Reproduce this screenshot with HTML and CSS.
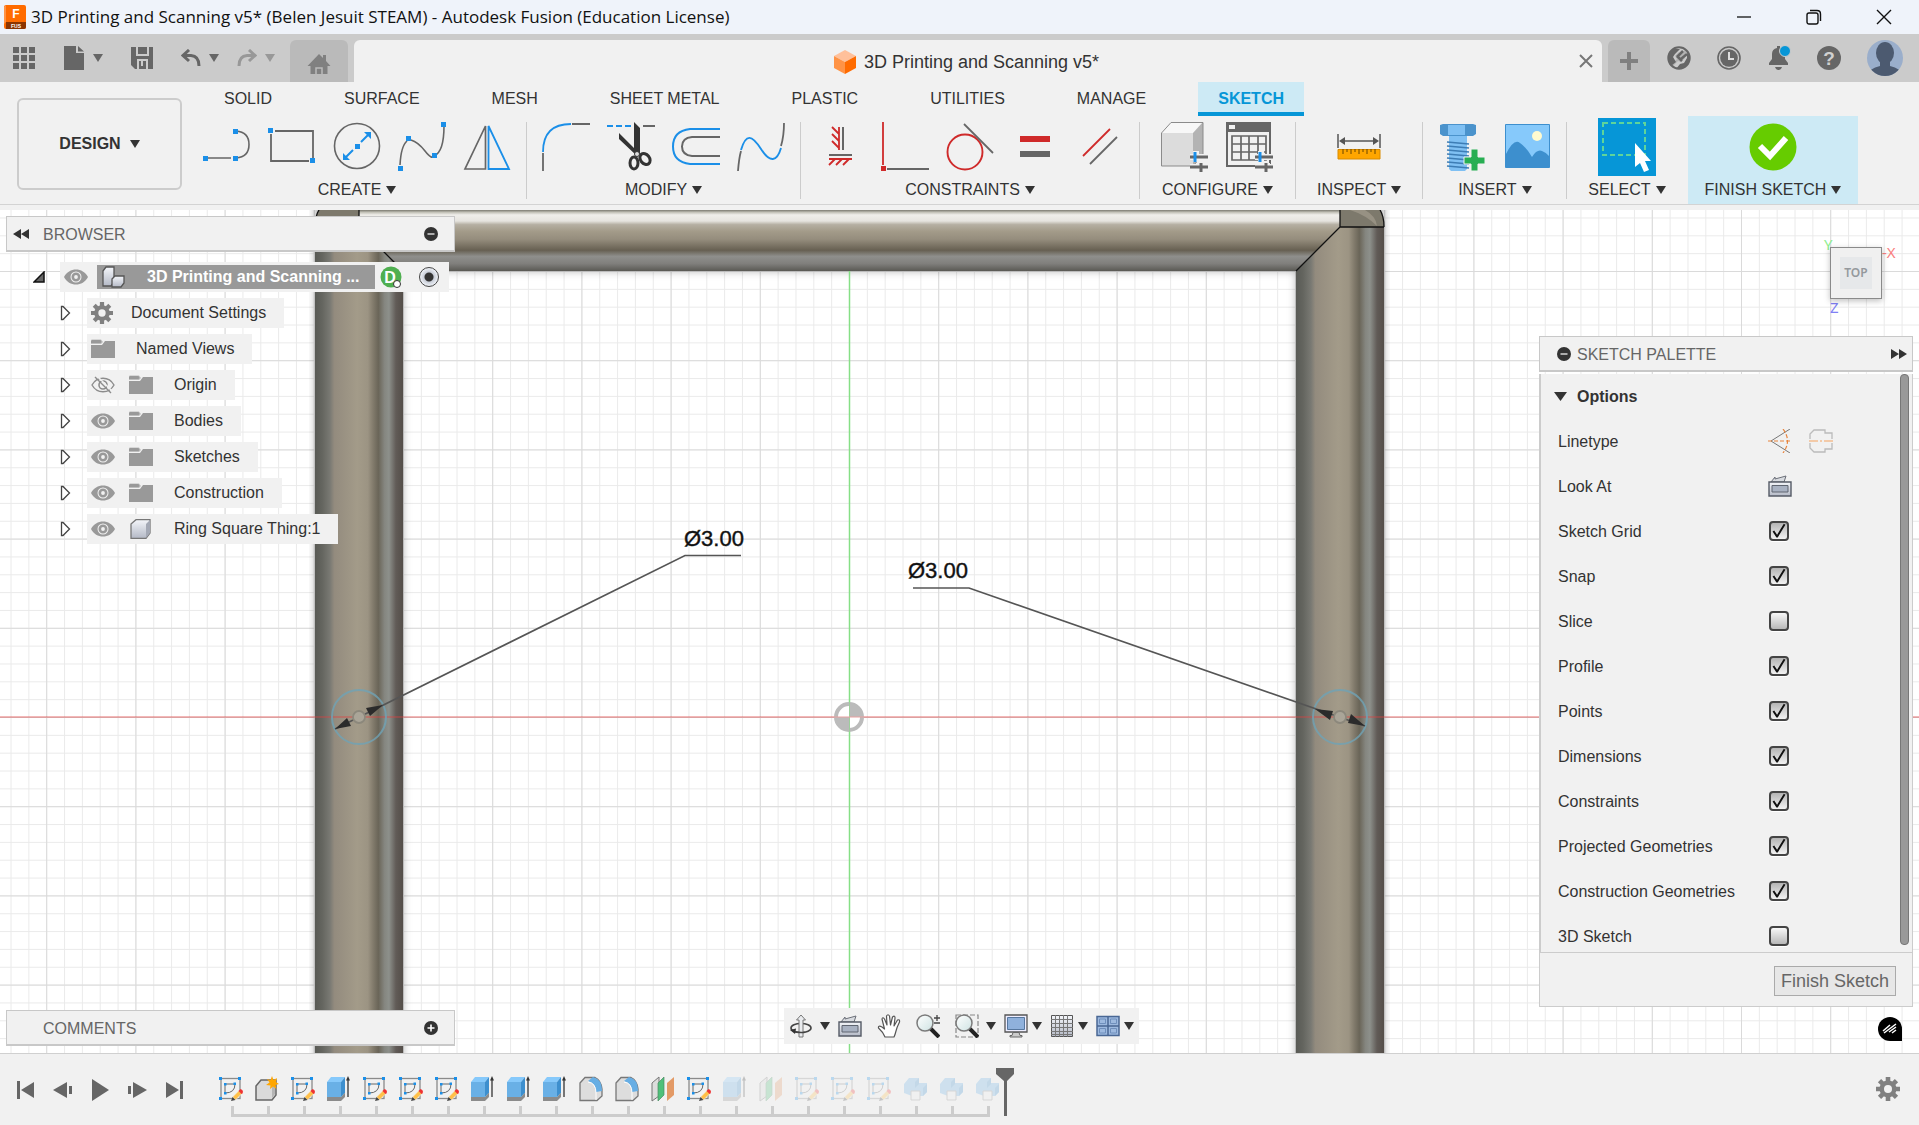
FILE: index.html
```html
<!DOCTYPE html>
<html lang="en">
<head>
<meta charset="utf-8">
<meta name="viewport" content="width=device-width, initial-scale=1">
<title>3D Printing and Scanning v5* - Autodesk Fusion</title>
<link rel="stylesheet" href="styles.css">
</head>
<body>
<svg class="sprite" aria-hidden="true">
  <defs>
    <linearGradient id="steel" x1="0" y1="0" x2="0" y2="1"><stop offset="0" stop-color="#f4f6fa"/><stop offset="1" stop-color="#b4b9c6"/></linearGradient>
    <linearGradient id="lens" x1="0" y1="0" x2="1" y2="1"><stop offset="0" stop-color="#ffffff"/><stop offset="1" stop-color="#cfe3e3"/></linearGradient>
  </defs>
  <symbol id="eye" viewBox="0 0 24 16"><path fill="#999" fill-rule="evenodd" d="M0 8C5-2 19-2 24 8 19 18 5 18 0 8ZM12 2.500a5.500 5.500 0 1 0 0 11 5.500 5.500 0 0 0 0-11Z"/><circle cx="12" cy="8" r="3.200" fill="none" stroke="#999" stroke-width="2.600"/></symbol>
  <symbol id="eye-off" viewBox="0 0 24 18"><path fill="none" stroke="#8c8c8c" stroke-width="1.400" d="M1 9C6 0 18 0 23 9 18 18 6 18 1 9ZM4 1l16 16"/><circle cx="12" cy="9" r="4" fill="none" stroke="#8c8c8c" stroke-width="1.600"/><path stroke="#f1f1f1" stroke-width="1.500" d="M6 0l16 16"/></symbol>
  <symbol id="folder" viewBox="0 0 24 20"><path fill="#bdbdbd" d="M0 1.500Q0 .5 1 .5H10L12 3 10 5H0Z"/><path fill="#999" d="M0 6H11L14 2H24V19H0Z"/><path fill="#999" d="M1 1H9.500L10.500 3 9.500 4H0V2Z"/></symbol>
  <symbol id="gear" viewBox="-12 -12 24 24"><g fill="currentColor"><path fill-rule="evenodd" d="M0-8.500A8.500 8.500 0 1 1 0 8.500 8.500 8.500 0 0 1 0-8.500ZM0-4a4 4 0 1 0 0 8 4 4 0 0 0 0-8Z"/><path id="teeth" d="M-2.300-12H2.300V-7H-2.300ZM-2.300 7H2.300V12H-2.300Z"/><use href="#teeth" transform="rotate(45)"/><use href="#teeth" transform="rotate(90)"/><use href="#teeth" transform="rotate(135)"/></g></symbol>
  <symbol id="expand" viewBox="0 0 12 16"><path fill="#fff" stroke="#444" stroke-width="1.300" d="M1.500 1.500H3L9.500 8 3 14.500H1.500Z"/></symbol>
  <symbol id="caret" viewBox="0 0 10 8"><path fill="currentColor" d="M0 0H10L5 8Z"/></symbol>
  <symbol id="t-sketch" viewBox="0 0 26 26"><rect x="3" y="2.500" width="19" height="20" fill="none" stroke="#8b8b8b" stroke-width="1.300"/><path fill="none" stroke="#666" d="M7 17V8H17Q17 17 7 17Z"/><g fill="#1b8fe8"><path d="M1 1h3v3H1ZM20 1h3v3h-3ZM1 21h3v3H1ZM6 7h2.500v2.500H6ZM15.500 6.500H18V9h-2.500ZM6 16h2.500v2.500H6Z"/></g><path fill="#ffc04a" stroke="#f1f1f1" stroke-width=".6" d="M14.500 21 21 14.500 24 17.500 17.500 24Z"/><path fill="#e33" d="M20.500 15 22.500 13Q26 14 24.500 17.500L23.500 18Z"/><path fill="#444" d="M14.500 21 17.500 24 13 25Z"/></symbol>
  <symbol id="t-extrude" viewBox="0 0 26 26"><path fill="#8b8b8b" d="M1 21H15L19 16.500V21L15 25H1Z"/><path fill="#69b0e6" d="M1 6H15V21H1Z"/><path fill="#86c9fb" d="M1 6 5 1H19L15 6Z"/><path fill="#3d8fce" d="M15 6 19 1V16.500L15 21Z"/><path stroke="#333" stroke-width="1.300" d="M22 21V3"/><path fill="#333" d="M20 4.500 22 0 24 4.500Z"/></symbol>
  <symbol id="t-component" viewBox="0 0 26 26"><path fill="#dadada" stroke="#666" stroke-width="1.500" d="M2 10 7 4H22V19L18 24H2Z"/><path fill="#b5b5b5" d="M18 11 21 8V18L18 22Z"/><path fill="#ffa600" d="M18 0 19.500 4 23 2 21.800 6 25 8 21.500 9 22.500 13 19 10.500 16 13 16.500 9.500 12 9 15.500 6.500 13 3 16.500 4Z"/></symbol>
  <symbol id="t-fillet" viewBox="0 0 26 26"><path fill="#ddd" stroke="#777" stroke-width="1.300" d="M2 7 7 1.500H17Q23 4 24 13V20L19 24.500H2Z"/><path fill="#67aee4" d="M10 5 15 1Q24 3 24 15L18 16Q18 7 10 5Z"/><path fill="none" stroke="#fff" d="M10 6Q18 7 18 17V24"/></symbol>
  <symbol id="t-split" viewBox="0 0 26 26"><path fill="#ddd" stroke="#777" d="M2 7 9 1V20L2 25Z"/><path fill="#4fc07a" stroke="#4a8a62" stroke-width=".7" d="M8 7 14 1V19L8 25Z"/><path fill="#e39a66" d="M17 7 24 1V19L17 25Z"/></symbol>
  <symbol id="t-combine" viewBox="0 0 26 26"><path fill="#69b0e6" d="M2 8 7 2H17V7H25V16L21 20H10L2 17Z"/><path fill="#3d8fce" d="M13 6 17 2V8L13 12ZM21 12 25 8V16L21 20Z"/><path fill="#eee" stroke="#888" d="M9 15H18V24H9Z"/></symbol>
  <symbol id="lookat" viewBox="0 0 24 24"><path fill="#d8dbe0" stroke="#6b6f78" d="M3 8 7 3V5L18 2 16 8Z"/><path fill="url(#steel)" stroke="#555b66" stroke-width="1.400" d="M1 8H23V22H1Z"/><path fill="#a9b2c2" stroke="#5f6570" d="M4 11.500H20V18H4Z"/></symbol>
  <symbol id="minus-dot" viewBox="0 0 14 14"><circle cx="7" cy="7" r="7" fill="#333"/><path stroke="#ccc" stroke-width="1.600" d="M3.500 7H10.500"/></symbol>
  <symbol id="plus-dot" viewBox="0 0 14 14"><circle cx="7" cy="7" r="7" fill="#333"/><path stroke="#fff" stroke-width="1.600" d="M3.500 7H10.500M7 3.500V10.500"/></symbol>
  <symbol id="sliders" viewBox="0 0 18 22"><path stroke="#f1f1f1" stroke-width="6" d="M0 6H18M0 16H18M6 0V11M12 12V22"/><path stroke="#666" stroke-width="3" d="M0 6H18M0 16H18M11 12V21"/><path stroke="#1b8fe8" stroke-width="3" d="M5 1V11"/></symbol>
</svg>

<header class="titlebar">
  <svg class="app-icon" viewBox="0 0 22 24"><rect width="22" height="24" rx="2" fill="#ff6b00"/><path fill="#ff9345" d="M0 2 2 0V17L0 19Z"/><path fill="#8c3400" d="M2 17H22V22Q22 24 20 24H2Z"/><text x="12" y="13" text-anchor="middle" font-family="Liberation Sans, sans-serif" font-weight="bold" font-size="12" fill="#fff">F</text><text x="12" y="23" text-anchor="middle" font-family="Liberation Sans, sans-serif" font-weight="bold" font-size="5" fill="#fff">FUS</text></svg>
  <h1>3D Printing and Scanning v5* (Belen Jesuit STEAM) - Autodesk Fusion (Education License)</h1>
  <div class="window-buttons">
    <button aria-label="Minimize"><svg width="16" height="16" viewBox="0 0 16 16"><path stroke="#111" stroke-width="1.300" d="M1 8H15"/></svg></button>
    <button aria-label="Restore"><svg width="16" height="16" viewBox="0 0 16 16"><rect x="1" y="4" width="11" height="11" rx="2" fill="none" stroke="#111" stroke-width="1.400"/><path fill="none" stroke="#111" stroke-width="1.400" d="M4 1.500H11Q14.500 1.500 14.500 5V12"/></svg></button>
    <button aria-label="Close"><svg width="16" height="16" viewBox="0 0 16 16"><path stroke="#111" stroke-width="1.400" d="M1 1 15 15M15 1 1 15"/></svg></button>
  </div>
</header>

<div class="tabbar">
  <div class="quick">
    <button aria-label="Data panel"><svg width="22" height="22" viewBox="0 0 22 22"><path fill="#666" d="M0 0h6v6H0ZM8 0h6v6H8ZM16 0h6v6h-6ZM0 8h6v6H0ZM8 8h6v6H8ZM16 8h6v6h-6ZM0 16h6v6H0ZM8 16h6v6H8ZM16 16h6v6h-6Z"/></svg></button>
    <button class="split" aria-label="File"><svg width="22" height="24" viewBox="0 0 22 24"><path fill="#666" d="M1 0H13V7H21V24H1ZM15 0 21 5.500H15Z"/></svg><svg class="caret"><use href="#caret"/></svg></button>
    <button aria-label="Save"><svg width="22" height="22" viewBox="0 0 22 22"><path fill="#666" d="M0 0H22V22H4L0 18Z"/><path fill="none" stroke="#cbcbcb" stroke-width="2" d="M6 0V8H17V0M7 22V13H16V22M11 14V19"/></svg></button>
    <div class="history">
      <button class="split" aria-label="Undo"><svg width="20" height="18" viewBox="0 0 20 18"><path fill="none" stroke="#666" stroke-width="3" d="M8 1 2 6.500 8 12M2 6.500H10Q18 7 18 17"/></svg><svg class="caret"><use href="#caret"/></svg></button>
      <button class="split faded" aria-label="Redo"><svg width="20" height="18" viewBox="0 0 20 18"><path fill="none" stroke="#666" stroke-width="3" d="M12 1 18 6.500 12 12M18 6.500H10Q2 7 2 17"/></svg><svg class="caret"><use href="#caret"/></svg></button>
    </div>
  </div>
  <button class="home" aria-label="Home"><svg width="24" height="20" viewBox="0 0 24 20"><path fill="#808080" d="M12 0 16 4V1H19V7L23.500 12H20.500V20H3.500V12H.5Z"/><path fill="none" stroke="#bababa" stroke-width="1.500" d="M9 20V14H15V20"/></svg></button>
  <div class="doc-tab">
    <span class="doc-title"><svg width="22" height="24" viewBox="0 0 22 24"><path fill="#ffc09a" d="M11 0 22 6 11 12 0 6Z"/><path fill="#ff9345" d="M0 6 11 12V24L0 18Z"/><path fill="#ff6b00" d="M22 6 11 12V24L22 18Z"/></svg>3D Printing and Scanning v5*</span>
    <button aria-label="Close tab"><svg width="14" height="14" viewBox="0 0 14 14"><path stroke="#777" stroke-width="2" d="M1 1 13 13M13 1 1 13"/></svg></button>
  </div>
  <button class="new-tab" aria-label="New tab"><svg width="20" height="20" viewBox="0 0 20 20"><path stroke="#808080" stroke-width="4" d="M10 1V19M1 10H19"/></svg></button>
  <div class="account">
    <button aria-label="Extensions"><svg width="24" height="24" viewBox="0 0 24 24"><circle cx="12" cy="12" r="10.700" fill="none" stroke="#666" stroke-width="2"/><path fill="#666" d="M6 3H13L8 8 6 11 9 16 4 20 1 14 2 7ZM20 6 23 12 21 18 15 23H9L13 18 17 17 20 12Z"/><path fill="#666" d="M5 18 10 13 8 10 12 6 14 8 18 4 20 6 16 10 18 12 14 16 11 15 6 20Z" fill-opacity=".25"/><path stroke="#666" stroke-width="2.500" d="M10 11 16 5M14 13 20 8M10 10 15 15"/></svg></button>
    <button aria-label="Job status"><svg width="24" height="24" viewBox="0 0 24 24"><circle cx="12" cy="12" r="11" fill="none" stroke="#666" stroke-width="1.600"/><circle cx="12" cy="12" r="8.800" fill="#666"/><path fill="none" stroke="#ddd" stroke-width="2" d="M12 6V13H17"/></svg></button>
    <button aria-label="Notifications"><svg width="24" height="26" viewBox="0 0 24 26"><path fill="#666" d="M2 20V18L5 14V9Q5 4 10 3V1H13V3Q18 4 18 9V14L21 18V20ZM8 22H15Q14 25 11.500 25T8 22Z"/><circle cx="18" cy="6" r="5.500" fill="#0696d7" stroke="#cbcbcb"/></svg></button>
    <button aria-label="Help"><svg width="24" height="24" viewBox="0 0 24 24"><circle cx="12" cy="12" r="12" fill="#666"/><text x="12" y="19" text-anchor="middle" font-family="Liberation Sans, sans-serif" font-weight="bold" font-size="19" fill="#d0d0d0">?</text></svg></button>
    <button class="avatar" aria-label="Account"><svg width="36" height="36" viewBox="0 0 36 36"><clipPath id="round"><circle cx="18" cy="18" r="18"/></clipPath><g clip-path="url(#round)"><path fill="#9aaecb" d="M0 0H36V36H0Z"/><ellipse cx="18" cy="13" rx="9" ry="11" fill="#4c5a70"/><path fill="#4c5a70" d="M13 18H23V26Q34 28 35 36H1Q2 28 13 26Z"/></g></svg></button>
  </div>
</div>

<section class="ribbon">
  <button class="workspace">DESIGN <svg class="caret"><use href="#caret"/></svg></button>
  <div class="ribbon-main">
    <nav class="modes">
      <a href="#solid">SOLID</a><a href="#surface">SURFACE</a><a href="#mesh">MESH</a><a href="#sheet">SHEET METAL</a><a href="#plastic">PLASTIC</a><a href="#utilities">UTILITIES</a><a href="#manage">MANAGE</a><a href="#sketch" class="active">SKETCH</a>
    </nav>
    <div class="groups">
      <div class="group">
        <div class="tools">
          <button aria-label="Line"><svg viewBox="0 0 48 58"><path fill="none" stroke="#666" stroke-width="1.600" d="M5 40H28M33 40Q46 39 46 26.500T33 13"/><path fill="#1b8fe8" d="M0 38h5v5H0ZM30 38h5v5h-5ZM30 11h5v5h-5Z"/></svg></button>
          <button aria-label="Rectangle"><svg viewBox="0 0 48 58"><path fill="none" stroke="#666" stroke-width="1.800" d="M7 13H45V40M41 43H3V16"/><path fill="#1b8fe8" d="M0 10h5v5H0ZM42 40h5v5h-5Z"/></svg></button>
          <button aria-label="Circle"><svg viewBox="0 0 48 58"><circle cx="24" cy="28" r="22.500" fill="none" stroke="#666" stroke-width="1.600"/><path stroke="#1b8fe8" stroke-width="2" d="M13 39 20 32M28 24 35 17"/><path fill="#1b8fe8" d="M22 26h5v5h-5ZM10 42V35L17 42ZM38 14V21L31 14Z"/></svg></button>
          <button aria-label="Spline"><svg viewBox="0 0 48 58"><path fill="none" stroke="#666" stroke-width="1.600" d="M2 47Q3 28 9 23M13 22Q20 24 27 33T36 38Q46 34 46 8"/><path fill="#1b8fe8" d="M0 48h5v5H0ZM8 18h5v5H8ZM34 35h5v5h-5ZM43 4h5v5h-5Z"/></svg></button>
          <button aria-label="Mirror"><svg viewBox="0 0 48 58"><path fill="none" stroke="#666" stroke-width="1.700" d="M22.500 8V51H2Z"/><path fill="none" stroke="#1b8fe8" stroke-width="1.800" d="M25.500 8V51H46Z"/></svg></button>
        </div>
        <button class="group-label">CREATE <svg class="caret"><use href="#caret"/></svg></button>
      </div>
      <div class="group">
        <div class="tools">
          <button aria-label="Fillet"><svg viewBox="0 0 48 58"><path fill="none" stroke="#1b8fe8" stroke-width="1.800" d="M1 34Q1 6 29 6"/><path stroke="#666" stroke-width="1.800" d="M30 6H48M1 35V53"/></svg></button>
          <button aria-label="Trim"><svg viewBox="0 0 48 58"><path stroke="#1b8fe8" stroke-width="2" stroke-dasharray="6 3" d="M0 8H26"/><path stroke="#666" stroke-width="2" d="M36 8H48"/><path fill="#333" d="M27 4 33 10V36L30 38 12 21V15L27 30Z"/><ellipse cx="27" cy="45" rx="4" ry="6" fill="none" stroke="#333" stroke-width="3"/><ellipse cx="38" cy="41" rx="4.500" ry="6" transform="rotate(-38 38 41)" fill="none" stroke="#333" stroke-width="3"/><circle cx="30" cy="36" r="2.500" fill="#ddd" stroke="#333"/></svg></button>
          <button aria-label="Offset"><svg viewBox="0 0 48 58"><path fill="none" stroke="#1b8fe8" stroke-width="2" d="M48 11H18Q1 13 1 28.500T18 46H48"/><path fill="none" stroke="#666" stroke-width="2" d="M48 19H20Q10 20 10 28.500T20 38H48"/></svg></button>
          <button aria-label="Blend curve"><svg viewBox="0 0 48 58"><path fill="none" stroke="#666" stroke-width="1.800" d="M1 53Q2 40 4 33M44 28Q47 18 47 5"/><path fill="none" stroke="#1b8fe8" stroke-width="1.900" d="M4 32C9 15 15 17 24 31S40 44 44 30"/></svg></button>
        </div>
        <button class="group-label">MODIFY <svg class="caret"><use href="#caret"/></svg></button>
      </div>
      <div class="group">
        <div class="tools">
          <button aria-label="Horizontal/Vertical"><svg viewBox="0 0 48 58"><path stroke="#cf2a2a" stroke-width="1.800" fill="none" d="M23 9V32M16 9 23 16M16 16 23 23M16 23 23 30M13 41H36M13 47 19 41M20 47 26 41M27 47 33 41"/><path stroke="#666" stroke-width="2" d="M27 9V32M13 37H36"/></svg></button>
          <button aria-label="Perpendicular"><svg viewBox="0 0 48 58"><path stroke="#cf2a2a" stroke-width="1.800" d="M2 4V47"/><path fill="#cf2a2a" d="M0 48h5v5H0Z"/><path stroke="#666" stroke-width="1.800" d="M6 51H48"/></svg></button>
          <button aria-label="Tangent"><svg viewBox="0 0 48 58"><circle cx="19" cy="34" r="17.500" fill="none" stroke="#cf2a2a" stroke-width="1.900"/><path stroke="#666" stroke-width="1.800" d="M18 6 47 35"/></svg></button>
          <button aria-label="Equal"><svg viewBox="0 0 48 58"><path fill="#cf2a2a" d="M9 18H39V24H9Z"/><path fill="#666" d="M9 33H39V39H9Z"/></svg></button>
          <button aria-label="Parallel"><svg viewBox="0 0 48 58"><path stroke="#cf2a2a" stroke-width="1.800" d="M7 38 34 11"/><path stroke="#666" stroke-width="1.800" d="M14 46 41 19"/></svg></button>
        </div>
        <button class="group-label">CONSTRAINTS <svg class="caret"><use href="#caret"/></svg></button>
      </div>
      <div class="group roomy">
        <div class="tools">
          <button aria-label="Configure body"><svg viewBox="0 0 48 58"><path fill="#dcdcdc" d="M0 15H32V48H0Z"/><path fill="#f7f7f7" d="M0 15 10 4H42L32 15Z"/><path fill="#b3b3b3" d="M32 15 42 4V37L32 48Z"/><path fill="none" stroke="#8b8b8b" d="M.5 15 10 4.500H42V37L32 48H.5Z"/><use href="#sliders" x="28" y="33" width="20" height="22"/></svg></button>
          <button aria-label="Configuration table"><svg viewBox="0 0 48 58"><path fill="#666" d="M0 4H45V14H0Z"/><path fill="#f1f1f1" d="M3 7H9V11H3Z"/><path fill="none" stroke="#666" stroke-width="2" d="M1 13V48H44V13"/><path fill="none" stroke="#666" stroke-width="1.700" d="M6 18H40V42H6ZM6 26H40M6 34H40M15 18V42M23 18V42M32 18V42"/><use href="#sliders" x="28" y="33" width="20" height="22"/></svg></button>
        </div>
        <button class="group-label">CONFIGURE <svg class="caret"><use href="#caret"/></svg></button>
      </div>
      <div class="group roomy">
        <div class="tools">
          <button aria-label="Measure"><svg viewBox="0 0 48 58"><path stroke="#555" stroke-width="1.500" d="M3 16V30M45 16V30M8 23H40"/><path fill="#555" d="M4 23 10 19V27ZM44 23 38 19V27Z"/><path fill="#ffa600" stroke="#d98b00" d="M3 31.500H45V41H3Z"/><path stroke="#6b4600" d="M8 31V36M12 31V34M16 31V36M20 31V34M24 31V36M28 31V34M32 31V36M36 31V34M40 31V36"/></svg></button>
        </div>
        <button class="group-label">INSPECT <svg class="caret"><use href="#caret"/></svg></button>
      </div>
      <div class="group">
        <div class="tools">
          <button aria-label="Insert fastener"><svg viewBox="0 0 48 58"><path fill="#4b93cc" d="M2 7 5 6H35L38 7V16L35 18H5L2 16Z"/><path fill="#7fc0f3" d="M10 7H27V17H10Z"/><path fill="#7fc0f3" d="M11 18H29V51L27 53H13L11 51Z"/><path stroke="#3d7db5" stroke-width="1.500" d="M9 24 31 26M9 28 31 30M9 32 31 34M9 36 31 38M9 40 31 42M9 44 31 46M9 48 31 50"/><path fill="#27ae52" stroke="#f1f1f1" d="M33 31H40V39H47V46H40V53H33V46H26V39H33Z"/></svg></button>
          <button aria-label="Insert canvas"><svg viewBox="0 0 48 58"><path fill="#86c9fb" stroke="#3d8fce" d="M2.500 6.500H46.500V49.500H2.500Z"/><circle cx="34" cy="18" r="5" fill="#fffbd0"/><path fill="#3d8fce" d="M3 36Q11 20 17 25 23 29 29 39 34 31 39 33T46 38V49H3Z"/></svg></button>
        </div>
        <button class="group-label">INSERT <svg class="caret"><use href="#caret"/></svg></button>
      </div>
      <div class="group roomy last">
        <div class="tools">
          <button class="select-tool" aria-label="Select"><svg viewBox="0 0 58 58"><path fill="none" stroke="#5fd49a" stroke-width="2" stroke-dasharray="5 3" d="M5 5H47V37H5Z"/><path fill="#fff" d="M37 25V49L42 45 46 54 51 52 47 43H53Z"/></svg></button>
        </div>
        <button class="group-label">SELECT <svg class="caret"><use href="#caret"/></svg></button>
      </div>
      <div class="group finish">
        <div class="tools">
          <button aria-label="Finish sketch"><svg viewBox="0 0 48 58"><circle cx="24" cy="29" r="23.500" fill="#66cc00"/><path fill="none" stroke="#fff" stroke-width="6" d="M11 28 21 38 37 20"/></svg></button>
        </div>
        <button class="group-label">FINISH SKETCH<svg class="caret"><use href="#caret"/></svg></button>
      </div>
    </div>
  </div>
</section>

<main class="viewport">
  <svg class="scene" viewBox="0 210 1919 843" preserveAspectRatio="xMidYMid slice" role="img" aria-label="Sketch of a square frame with two 3 mm holes">
    <defs>
      <pattern id="minor" x="849" y="717" width="17.840" height="17.840" patternUnits="userSpaceOnUse"><path fill="none" stroke="#eaeaea" d="M0 0H17.840M0 0V17.840" stroke-width="2"/></pattern>
      <pattern id="major" x="849" y="717" width="89.200" height="89.200" patternUnits="userSpaceOnUse"><path fill="none" stroke="#dadada" d="M0 0H89.200M0 0V89.200" stroke-width="2"/></pattern>
      <linearGradient id="post"><stop offset="0" stop-color="#595a55"/><stop offset=".08" stop-color="#64655f"/><stop offset=".17" stop-color="#797973"/><stop offset=".22" stop-color="#938b7e"/><stop offset=".48" stop-color="#a39b89"/><stop offset=".6" stop-color="#9c9483"/><stop offset=".66" stop-color="#827b6c"/><stop offset=".72" stop-color="#6a6558"/><stop offset=".79" stop-color="#858680"/><stop offset=".84" stop-color="#8d908b"/><stop offset=".92" stop-color="#615b57"/><stop offset="1" stop-color="#544e49"/></linearGradient>
      <linearGradient id="beam" x1="0" y1="0" x2="0" y2="1"><stop offset="0" stop-color="#7b7a70"/><stop offset=".04" stop-color="#c5c4ba"/><stop offset=".08" stop-color="#efeeea"/><stop offset=".18" stop-color="#e6e4df"/><stop offset=".24" stop-color="#b5afa2"/><stop offset=".35" stop-color="#a39b89"/><stop offset=".48" stop-color="#958d7d"/><stop offset=".66" stop-color="#676052"/><stop offset=".76" stop-color="#8f8f8c"/><stop offset=".88" stop-color="#807f7c"/><stop offset="1" stop-color="#5a5954"/></linearGradient>
      <filter id="soft" x="-5%" y="-5%" width="110%" height="110%"><feGaussianBlur stdDeviation="4"/></filter>
    </defs>
    <path fill="#fff" d="M0 0H1919V1200H0Z"/>
    <path fill="url(#minor)" d="M0 0H1919V1200H0Z"/>
    <path fill="url(#major)" d="M0 0H1919V1200H0Z"/>
    <path fill="none" stroke="#000" stroke-opacity=".3" stroke-width="88" filter="url(#soft)" d="M359 1140V227H1340V1140"/>
    <path fill="url(#beam)" d="M359 210H1340V227L1296 271H403L359 227Z"/>
    <path fill="url(#post)" d="M315 227H359L403 271V1200H315Z"/>
    <path fill="url(#post)" d="M1340 227H1384V1200H1296V271Z"/>
    <path fill="#7d796c" d="M315 227Q315 216 319 210H359V227ZM1384 227Q1384 216 1380 210H1340V227Z"/>
    <path fill="#979183" d="M1350 210H1365Q1376 216 1377 226 1366 215 1350 210Z"/>
    <path fill="none" stroke="#111" stroke-width="1.300" d="M315 227Q315 216 319 210M359 210V227L403 271M315 227H359M1384 227Q1384 216 1380 210M1340 210V227L1296 271M1340 227H1384"/>
    <path stroke="#e04040" stroke-opacity=".5" stroke-width="1.400" d="M0 717H1919"/>
    <path stroke="#86df86" stroke-width="1.500" d="M849.500 271V1060"/>
    <g fill="none" stroke="#6fa3b5" stroke-width="2" stroke-opacity=".8"><circle cx="359" cy="717" r="27"/><circle cx="1340" cy="717" r="27"/></g>
    <path fill="none" stroke="#555" stroke-width="1.600" d="M335 729 685 555.500H741M1365 726 969 588H913"/>
    <path fill="#2b2b2b" d="M335 729 347 718 351 726ZM383 705 366 708 370 716ZM1365 726 1348 723 1351 714ZM1315 709 1333 711 1330 720Z"/>
    <g fill="#aaa598" stroke="#8c887c" stroke-width="1.800"><circle cx="359" cy="717" r="6"/><circle cx="1340" cy="717" r="6"/></g>
    <circle cx="849" cy="717" r="13" fill="#fff" stroke="#bbb" stroke-width="4"/>
    <path fill="#bbb" d="M849 717V703A14 14 0 0 1 863 717ZM849 717V731A14 14 0 0 1 835 717Z"/>
    <path stroke="#9ccf9c" d="M849.500 702V732"/><path stroke="#e9a0a0" d="M834 717H864"/>
    <g font-family="Liberation Sans, sans-serif" font-size="22" fill="#111" stroke="#111" stroke-width=".4"><text x="684" y="546">Ø3.00</text><text x="908" y="578">Ø3.00</text></g>
  </svg>

  <aside class="browser">
    <div class="panel-head"><svg width="16" height="12" viewBox="0 0 16 12"><path fill="#333" d="M8 1V11L0 6ZM16 1V11L8 6Z"/></svg><h2>BROWSER</h2><button aria-label="Collapse"><svg width="14" height="14"><use href="#minus-dot"/></svg></button></div>
    <ul class="tree">
      <li class="root">
        <svg class="root-arrow" width="12" height="12" viewBox="0 0 12 12"><path fill="#666" stroke="#111" stroke-width="1.500" d="M1 11H11V1Z"/></svg>
        <div class="node"><svg width="24" height="16"><use href="#eye"/></svg>
          <span class="root-name"><svg width="24" height="22" viewBox="0 0 24 22"><g fill="url(#steel)" stroke="#555" stroke-width="1.300"><path d="M1 5 4 1H12V16L9 20H1Z"/><path d="M10 13 13 10H22V17L19 21H10Z"/></g></svg>3D Printing and Scanning ...</span>
          <svg class="badge" width="22" height="22" viewBox="0 0 22 22"><circle cx="11" cy="11" r="10.500" fill="#4faf50"/><text x="10" y="17" text-anchor="middle" font-family="Liberation Sans, sans-serif" font-weight="bold" font-size="16" fill="#fff">D</text><circle cx="17" cy="18" r="3.500" fill="#fff" stroke="#333"/></svg>
          <input type="radio" name="active" aria-label="Activate component" checked>
        </div>
      </li>
      <li><svg class="arrow"><use href="#expand"/></svg><div class="node doc"><svg class="cog" width="22" height="22"><use href="#gear"/></svg>Document Settings</div></li>
      <li><svg class="arrow"><use href="#expand"/></svg><div class="node views"><svg width="24" height="20"><use href="#folder"/></svg>Named Views</div></li>
      <li><svg class="arrow"><use href="#expand"/></svg><div class="node"><svg width="24" height="18"><use href="#eye-off"/></svg><svg class="kind" width="24" height="20"><use href="#folder"/></svg>Origin</div></li>
      <li><svg class="arrow"><use href="#expand"/></svg><div class="node"><svg width="24" height="16"><use href="#eye"/></svg><svg class="kind" width="24" height="20"><use href="#folder"/></svg>Bodies</div></li>
      <li><svg class="arrow"><use href="#expand"/></svg><div class="node"><svg width="24" height="16"><use href="#eye"/></svg><svg class="kind" width="24" height="20"><use href="#folder"/></svg>Sketches</div></li>
      <li><svg class="arrow"><use href="#expand"/></svg><div class="node"><svg width="24" height="16"><use href="#eye"/></svg><svg class="kind" width="24" height="20"><use href="#folder"/></svg>Construction</div></li>
      <li><svg class="arrow"><use href="#expand"/></svg><div class="node"><svg width="24" height="16"><use href="#eye"/></svg><svg class="kind" width="24" height="20" viewBox="0 0 24 20"><path fill="url(#steel)" stroke="#777" stroke-width="1.300" d="M2 5 7 .7H21V14L17 19.300H2Z"/><path fill="#a4a9b5" d="M17 5 21 1V14L17 19Z"/></svg>Ring Square Thing:1</div></li>
    </ul>
  </aside>

  <div class="viewcube" aria-label="View cube"><span class="axis y">Y</span><span class="axis x">-X</span><span class="axis z">Z</span><button>TOP</button></div>

  <aside class="palette">
    <div class="panel-head"><button aria-label="Collapse"><svg width="14" height="14"><use href="#minus-dot"/></svg></button><h2>SKETCH PALETTE</h2><svg width="16" height="12" viewBox="0 0 16 12"><path fill="#333" d="M0 1V11L8 6ZM8 1V11L16 6Z"/></svg></div>
    <div class="palette-body">
      <h3><svg width="13" height="9" viewBox="0 0 13 9"><path fill="#333" d="M0 0H13L6.500 9Z"/></svg>Options</h3>
      <div class="row"><span>Linetype</span><button aria-label="Construction"><svg width="24" height="24" viewBox="0 0 24 24"><path fill="none" stroke="#777" d="M22 0 3 12 22 24"/><path fill="none" stroke="#e8843c" stroke-width="1.200" stroke-dasharray="4 2" d="M0 12H24M15 0Q24 12 15 24"/></svg></button><button aria-label="Centerline"><svg width="24" height="24" viewBox="0 0 24 24"><path fill="none" stroke="#bbb" stroke-width="1.300" d="M1 10V5L5 1H16V4H23V10M1 14V19L5 23H16V20H23V14"/><path stroke="#f3bd90" stroke-width="1.400" stroke-dasharray="9 2 2 2" d="M0 12H24"/></svg></button></div>
      <div class="row"><span>Look At</span><button aria-label="Look At"><svg width="24" height="24"><use href="#lookat"/></svg></button></div>
      <label class="row"><span>Sketch Grid</span><input type="checkbox" checked></label>
      <label class="row"><span>Snap</span><input type="checkbox" checked></label>
      <label class="row"><span>Slice</span><input type="checkbox"></label>
      <label class="row"><span>Profile</span><input type="checkbox" checked></label>
      <label class="row"><span>Points</span><input type="checkbox" checked></label>
      <label class="row"><span>Dimensions</span><input type="checkbox" checked></label>
      <label class="row"><span>Constraints</span><input type="checkbox" checked></label>
      <label class="row"><span>Projected Geometries</span><input type="checkbox" checked></label>
      <label class="row"><span>Construction Geometries</span><input type="checkbox" checked></label>
      <label class="row"><span>3D Sketch</span><input type="checkbox"></label>
      <div class="scroll"></div>
    </div>
    <div class="palette-foot"><button>Finish Sketch</button></div>
  </aside>

  <aside class="comments panel-head"><h2>COMMENTS</h2><button aria-label="Expand comments"><svg width="14" height="14"><use href="#plus-dot"/></svg></button></aside>

  <div class="navbar">
    <button class="split" aria-label="Orbit"><svg width="24" height="24" viewBox="0 0 24 24"><ellipse cx="12" cy="14" rx="10" ry="4.500" fill="none" stroke="#444" stroke-width="1.600"/><path fill="#e9ebee" stroke="#777" d="M10 23V6H7.500L12 1 16.500 6H14V23Z"/><path fill="none" stroke="#444" stroke-width="1.600" d="M4 17Q8 19 16 18.300"/><path fill="#333" d="M1 16 7 14.500 6 20Z"/></svg><svg class="caret"><use href="#caret"/></svg></button>
    <button aria-label="Look at"><svg width="24" height="24"><use href="#lookat"/></svg></button>
    <button aria-label="Pan"><svg width="24" height="26" viewBox="0 0 24 26"><path fill="#fff" stroke="#555" stroke-width="1.200" stroke-linejoin="round" d="M8 24Q6 19 1.500 15 1 12 5 14L7.500 16 5 6Q5.500 3.500 7.500 6L10 12 9.500 3Q11 .5 12.500 3L13.500 12 15.500 4Q18 2 18 5L17 13 20.500 7Q23 6 22.500 9 20 14 19 18 18 22 17 24Z"/></svg></button>
    <button aria-label="Zoom"><svg width="24" height="24" viewBox="0 0 24 24"><path stroke="#222" stroke-width="4" d="M14 14 23 23"/><circle cx="9" cy="9" r="8" fill="url(#lens)" stroke="#7b7b7b" stroke-width="1.500"/><path stroke="#444" stroke-width="1.300" d="M21 1V7M18 4H24M18 9H24"/></svg></button>
    <button class="split" aria-label="Zoom window"><svg width="24" height="24" viewBox="0 0 24 24"><path fill="none" stroke="#888" stroke-width="1.200" stroke-dasharray="5 2" d="M1 1H23V23H1Z"/><path stroke="#222" stroke-width="4" d="M14 14 23 23"/><circle cx="9" cy="9" r="8" fill="url(#lens)" stroke="#7b7b7b" stroke-width="1.500"/></svg><svg class="caret"><use href="#caret"/></svg></button>
    <button class="split tight" aria-label="Display settings"><svg width="24" height="24" viewBox="0 0 24 24"><path fill="#eef" stroke="#555" stroke-width="1.300" d="M1 1H23V18H1Z"/><path fill="#8fb1dc" stroke="#56779f" d="M3.500 3.500H20.500V15.500H3.500Z"/><path fill="#ccc" stroke="#666" d="M9 18.500H15L16 21.500H18V23H6V21.500H8Z"/></svg><svg class="caret"><use href="#caret"/></svg></button>
    <button class="split tight" aria-label="Grid and snaps"><svg width="24" height="24" viewBox="0 0 24 24"><path fill="url(#steel)" stroke="#555" d="M1.500 1.500H22.500V22.500H1.500Z"/><path stroke="#777" d="M5.500 1V23M9.500 1V23M13.500 1V23M17.500 1V23M1 5.500H23M1 9.500H23M1 13.500H23M1 17.500H23M1 20.500H23"/></svg><svg class="caret"><use href="#caret"/></svg></button>
    <button class="split tight" aria-label="Viewports"><svg width="24" height="24" viewBox="0 0 24 24"><path fill="#9db9df" stroke="#496794" stroke-width="1.500" d="M1 2.500H23V21.500H1Z"/><path stroke="#496794" stroke-width="1.500" d="M12 2V22M1 12H23"/><path fill="none" stroke="#6f8fbc" d="M3.500 5H9.500V9.500H3.500ZM14.500 5H20.500V9.500H14.500ZM3.500 14.500H9.500V19H3.500ZM14.500 14.500H20.500V19H14.500Z"/></svg><svg class="caret"><use href="#caret"/></svg></button>
  </div>
  <button class="assistant" aria-label="Assistant"><svg width="24" height="24" viewBox="0 0 24 24"><path d="M12 0A12 12 0 0 1 24 12V24H12A12 12 0 0 1 12 0Z"/><path stroke="#fff" stroke-width="1.500" d="M5 14 12 8M6 16 18 7M11 15 18 10M14 16 18 13"/></svg></button>
</main>

<footer class="timeline">
  <div class="playback">
    <button aria-label="Go to start"><svg viewBox="0 0 18 22"><path fill="#666" d="M0 2H3V20H0ZM17 3V19L4 11Z"/></svg></button>
    <button aria-label="Step back"><svg viewBox="0 0 18 22"><path fill="#666" d="M13 3V19L-1 11ZM15 7H18V15H15Z"/></svg></button>
    <button aria-label="Play"><svg viewBox="0 0 18 22"><path fill="#666" d="M1 0V22L18 11Z"/></svg></button>
    <button aria-label="Step forward"><svg viewBox="0 0 18 22"><path fill="#666" d="M5 3V19L19 11ZM0 7H3V15H0Z"/></svg></button>
    <button aria-label="Go to end"><svg viewBox="0 0 18 22"><path fill="#666" d="M18 2H15V20H18ZM1 3V19L14 11Z"/></svg></button>
  </div>
  <ol class="features">
    <li><svg><use href="#t-sketch"/></svg></li><li><svg><use href="#t-component"/></svg></li><li><svg><use href="#t-sketch"/></svg></li><li><svg><use href="#t-extrude"/></svg></li><li><svg><use href="#t-sketch"/></svg></li><li><svg><use href="#t-sketch"/></svg></li><li><svg><use href="#t-sketch"/></svg></li><li><svg><use href="#t-extrude"/></svg></li><li><svg><use href="#t-extrude"/></svg></li><li><svg><use href="#t-extrude"/></svg></li><li><svg><use href="#t-fillet"/></svg></li><li><svg><use href="#t-fillet"/></svg></li><li><svg><use href="#t-split"/></svg></li><li><svg><use href="#t-sketch"/></svg></li><li class="off"><svg><use href="#t-extrude"/></svg></li><li class="off"><svg><use href="#t-split"/></svg></li><li class="off"><svg><use href="#t-sketch"/></svg></li><li class="off"><svg><use href="#t-sketch"/></svg></li><li class="off"><svg><use href="#t-sketch"/></svg></li><li class="off"><svg><use href="#t-combine"/></svg></li><li class="off"><svg><use href="#t-combine"/></svg></li><li class="off"><svg><use href="#t-combine"/></svg></li>
  </ol>
  <svg class="marker" width="18" height="48" viewBox="0 0 18 48"><path fill="#666" d="M0 0H18V6L11 13V48H8V13L0 6Z"/></svg>
  <button class="settings" aria-label="Timeline settings"><svg width="24" height="24"><use href="#gear"/></svg></button>
</footer>
</body>
</html>
```
FILE: styles.css
```css
* { box-sizing: border-box; }
html, body { height: 100%; }
body {
  margin: 0;
  display: flex;
  flex-direction: column;
  background: #f1f1f1;
  color: #333;
  font: 16px/20px "Liberation Sans", Arial, sans-serif;
  overflow: hidden;
}
button { padding: 0; border: 0; background: none; color: inherit; font: inherit; display: flex; align-items: center; justify-content: center; }
svg { display: block; flex: none; }
h1, h2, h3, ul, ol { margin: 0; padding: 0; font: inherit; list-style: none; }
a { color: inherit; text-decoration: none; }
.sprite { position: absolute; width: 0; height: 0; }
.caret { width: 10px; height: 8px; }
.split { gap: 8px; }
.faded { opacity: .5; }

.titlebar { flex: none; height: 34px; padding-left: 4px; display: flex; align-items: center; gap: 5px; background: #eff3fa; color: #111; }
.titlebar h1 { flex: 1; font: 17px/24px "Open Sans", sans-serif; white-space: nowrap; overflow: hidden; }
.app-icon { width: 22px; height: 24px; }
.window-buttons { display: flex; }
.window-buttons button { width: 70px; height: 34px; }

.tabbar { flex: none; height: 48px; padding-top: 6px; display: flex; background: #cbcbcb; }
.quick { display: flex; align-items: center; gap: 28px; padding: 0 15px 6px 13px; color: #666; }
.history { display: flex; gap: 18px; }
.home { width: 58px; padding-top: 6px; border-radius: 6px 6px 0 0; background: #bababa; }
.doc-tab { flex: 1; margin: 0 6px; padding-right: 9px; display: flex; align-items: center; background: #f1f1f1; border-radius: 6px 6px 0 0; }
.doc-title { flex: 1; padding-top: 2px; display: flex; align-items: center; justify-content: center; gap: 8px; font-size: 18px; line-height: 24px; }
.new-tab { width: 42px; background: #bababa; border-radius: 6px 6px 0 0; }
.account { display: flex; align-items: center; gap: 26px; padding: 0 16px 6px 17px; }

.ribbon { flex: none; height: 128px; padding-bottom: 5px; display: flex; }
.workspace { width: 165px; height: 92px; margin: 16px 6px 0 17px; gap: 9px; border: 2px solid #ccc; border-radius: 6px; font-weight: bold; }
.ribbon-main { flex: 1; display: flex; flex-direction: column; }
.ribbon { position: relative; }
.ribbon::after { content: ""; position: absolute; left: 0; right: 0; bottom: 5px; height: 1px; background: #d3d3d3; }
.modes { display: flex; gap: 32px; padding-left: 16px; }
.modes a { height: 34px; padding: 7px 20px 0; white-space: nowrap; }
.modes .active { background: #cdeaf5; border-bottom: 4px solid #0696d7; color: #0696d7; font-weight: bold; }
.groups { flex: 1; display: flex; }
.group { position: relative; padding: 0 16px 0 15px; display: flex; flex-direction: column; align-items: center; }
.group::after { content: ""; position: absolute; right: 0; top: 6px; bottom: 6px; width: 1px; background: #ccc; }
.roomy { padding: 0 22px 0 21px; }
.last::after, .finish::after { display: none; }
.finish { padding: 0 17px; background: #cdeaf5; }
.tools { display: flex; gap: 17px; padding-top: 2px; }
.tools svg { width: 48px; height: 58px; }
.tools .select-tool, .tools .select-tool svg { width: 58px; background: #0696d7; }
.group-label { gap: 5px; height: 28px; white-space: nowrap; }

.viewport { position: relative; flex: 1; min-height: 0; overflow: hidden; background: #fff; }
.scene { position: absolute; inset: 0; width: 100%; height: 100%; }

.panel-head { height: 36px; display: flex; align-items: center; background: #f1f1f1; border: 1px solid #c8c8c8; border-bottom-width: 2px; color: #666; }
.panel-head h2 { flex: 1; padding-top: 2px; }
.browser { position: absolute; left: 6px; top: 6px; width: 449px; }
.browser .panel-head { padding: 0 16px 0 6px; gap: 14px; }
.tree { padding-top: 7px; }
.tree li { height: 36px; display: flex; align-items: center; padding-left: 54px; }
.arrow { width: 12px; height: 16px; margin-right: 15px; }
.node { height: 30px; display: flex; align-items: center; padding: 0 18px 0 4px; background: #f1f1f1; white-space: nowrap; }
.node .kind { margin: 0 21px 0 14px; }
.cog { color: #808080; }
.doc { gap: 18px; }
.views { gap: 21px; }
.tree .root { padding-left: 27px; }
.root-arrow { margin-right: 15px; }
.root .node { padding-right: 10px; }
.root-name { width: 278px; height: 24px; margin: 0 5px 0 9px; padding-left: 5px; display: flex; align-items: center; gap: 21px; background: #999; color: #fff; font-weight: bold; }
.badge { margin-right: 17px; }
.root input { appearance: none; width: 20px; height: 20px; margin: 0; border: 1px solid #444; border-radius: 50%; background: radial-gradient(circle, #333 0 4px, #c9ced8 5px, #eef1f6 9px); }

.viewcube { position: absolute; right: 37px; top: 37px; width: 52px; height: 52px; }
.viewcube button { position: relative; width: 100%; height: 100%; border: 1px solid #8a8a8a; background: #e6e8ea; box-shadow: inset 0 0 0 9px #f0f0f0, 0 2px 6px rgba(0, 0, 0, .25); color: #94999d; font: 600 12px/16px "Noto Sans", sans-serif; }
.axis { position: absolute; font: 15px/16px "Noto Sans", sans-serif; white-space: nowrap; }
.axis.y { left: -6px; top: -11px; color: #8fee8f; }
.axis.x { left: 52px; top: -3px; color: #f98080; }
.axis.z { left: 0; top: 52px; color: #8080f4; }

.palette { position: absolute; right: 6px; top: 126px; bottom: 46px; width: 374px; display: flex; flex-direction: column; }
.palette .panel-head { flex: none; padding: 0 5px 0 17px; gap: 6px; margin-bottom: 2px; }
.palette-body { position: relative; flex: 1; min-height: 0; overflow: hidden; background: #f1f1f1; border: solid #ccc; border-width: 0 1px 1px 2px; }
.palette h3 { height: 45px; padding-left: 13px; display: flex; align-items: center; gap: 10px; font-weight: bold; }
.row { height: 45px; padding-left: 17px; display: flex; align-items: center; }
.row span { width: 210px; }
.row button { margin: 0 17px 2px 0; }
.row input { appearance: none; width: 20px; height: 20px; margin: 0 0 2px 1px; border: 2px solid #444; border-radius: 4px; background: linear-gradient(#f8f8f8, #b8b8b8); box-shadow: 0 1px #fff; }
.row input:checked { background: linear-gradient(#b4b4b4, #f2f2f2); }
.row input:checked::before { content: ""; display: block; width: 16px; height: 16px; background: #111; clip-path: polygon(10% 57%, 20% 50%, 38% 76%, 80% 8%, 90% 14%, 42% 94%, 34% 94%); }
.scroll { position: absolute; right: 3px; top: 0; bottom: 7px; width: 9px; border: 1px solid #777; border-radius: 4px; background: #999; }
.palette-foot { flex: none; height: 54px; padding: 2px 16px 0 0; display: flex; align-items: center; justify-content: flex-end; background: #f1f1f1; border: 1px solid #ccc; border-top: 0; }
.palette-foot button { height: 30px; padding: 0 6px; background: #e7e7e7; border: 1px solid #aaa; color: #666; font-size: 18px; }

.comments { position: absolute; left: 6px; bottom: 7px; width: 449px; padding: 0 16px 0 36px; }
.navbar { position: absolute; left: 50%; bottom: 9px; height: 36px; margin-left: -176px; padding: 0 5px; display: flex; align-items: center; gap: 15px; background: #f1f1f1; }
.navbar .split { gap: 7px; margin-right: -7px; }
.navbar .tight { gap: 4px; }
.navbar .tight:last-child { margin-right: 0; }
.assistant { position: absolute; right: 17px; bottom: 12px; }

.timeline { flex: none; height: 72px; border-top: 1px solid #d0d0d0; display: flex; align-items: flex-start; }
.playback { display: flex; gap: 19px; padding: 25px 30px 0 17px; }
.playback svg { width: 18px; height: 22px; overflow: visible; }
.features { display: flex; padding-top: 22px; }
.features li { position: relative; width: 36px; height: 41px; }
.features svg { width: 26px; height: 26px; margin-left: 5px; }
.features li::before { content: ""; position: absolute; left: 18px; bottom: 0; width: 3px; height: 11px; background: #ccc; }
.features li::after { content: ""; position: absolute; left: 18px; bottom: 0; width: 39px; height: 3px; background: #ccc; }
.features li:last-child::after { display: none; }
.off svg { opacity: .25; }
.marker { margin: 14px 0 0 -9px; }
.settings { margin: 23px 19px 0 auto; color: #808080; }
```
